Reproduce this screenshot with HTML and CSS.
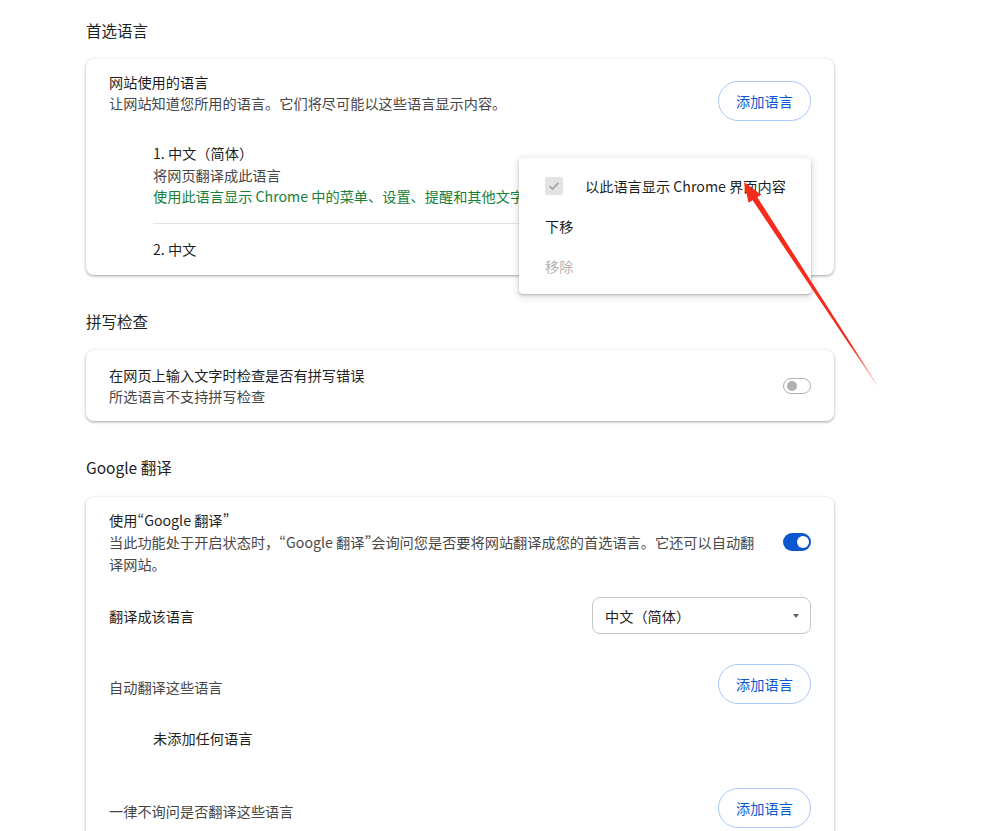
FILE: index.html
```html
<!DOCTYPE html>
<html lang="zh-CN">
  <head>
    <meta charset="UTF-8" />
    <meta name="viewport" content="width=device-width, initial-scale=1.0" />
    <title>语言</title>
    <link rel="stylesheet" href="styles.css">
  </head>
  <body>
    <div class="page">
      <h2 class="section-title">首选语言</h2>
      <div class="card languages">
        <div class="row head">
          <div class="text">
            <div class="label">网站使用的语言</div>
            <div class="sub">让网站知道您所用的语言。它们将尽可能以这些语言显示内容。</div>
          </div>
          <button class="add-btn">添加语言</button>
        </div>
        <ul class="lang-list">
          <li>
            <div class="label">1. 中文（简体）</div>
            <div class="sub">将网页翻译成此语言</div>
            <div class="note">使用此语言显示 Chrome 中的菜单、设置、提醒和其他文字</div>
          </li>
          <li>
            <div class="label">2. 中文</div>
          </li>
        </ul>

        <div class="menu">
          <div class="menu-item">
            <span class="checkbox">
              <svg width="18" height="18" viewBox="0 0 18 18"><path d="M4.6 9.2l2.9 2.9 5.9-6.2" fill="none" stroke="#a3a3a3" stroke-width="1.7"/></svg>
            </span>
            <span>以此语言显示 Chrome 界面内容</span>
          </div>
          <div class="menu-item">下移</div>
          <div class="menu-item disabled">移除</div>
        </div>
      </div>

      <h2 class="section-title spaced">拼写检查</h2>
      <div class="card spell">
        <div class="text">
          <div class="label">在网页上输入文字时检查是否有拼写错误</div>
          <div class="sub">所选语言不支持拼写检查</div>
        </div>
        <span class="toggle off"><span class="knob"></span></span>
      </div>

      <h2 class="section-title spaced">Google 翻译</h2>
      <div class="card translate">
        <div class="row first">
          <div class="text">
            <div class="label">使用<span class="q">“</span>Google 翻译<span class="q">”</span></div>
            <div class="sub">当此功能处于开启状态时，<span class="q">“</span>Google 翻译<span class="q">”</span>会询问您是否要将网站翻译成您的首选语言。它还可以自动翻译网站。</div>
          </div>
          <span class="toggle on"><span class="knob"></span></span>
        </div>

        <div class="row select-row">
          <div class="label">翻译成该语言</div>
          <div class="select">
            <span>中文（简体）</span>
            <span class="caret"></span>
          </div>
        </div>

        <div class="row btn-row">
          <div class="sub">自动翻译这些语言</div>
          <button class="add-btn">添加语言</button>
        </div>
        <div class="empty">未添加任何语言</div>

        <div class="row btn-row last">
          <div class="sub">一律不询问是否翻译这些语言</div>
          <button class="add-btn">添加语言</button>
        </div>
      </div>
    </div>

    <svg class="annotation" width="994" height="831" viewBox="0 0 994 831">
      <defs>
        <linearGradient id="fade" gradientUnits="userSpaceOnUse" x1="744" y1="182" x2="877" y2="385">
          <stop offset="0" stop-color="#f42b1d" />
          <stop offset="0.8" stop-color="#f42b1d" />
          <stop offset="1" stop-color="#f42b1d" stop-opacity="0.15" />
        </linearGradient>
      </defs>
      <polygon fill="url(#fade)" points="744,182 761.2,194.8 757.3,197.2 877.4,384.7 876.6,385.3 752.6,200.2 748.6,202.8" />
    </svg>
  </body>
</html>
```

FILE: styles.css
```css
* {
  box-sizing: border-box;
}
body {
  margin: 0;
  background: #fff;
  color: #1f1f1f;
  font-family: "Noto Sans CJK SC", "Noto Sans", sans-serif;
  font-size: 14.2px;
}
.page {
  width: 834px;
  padding: 20px 0 40px 86px;
}
.section-title {
  margin: 0 0 19px;
  font-size: 15.5px;
  font-weight: 400;
  line-height: 20px;
}
.section-title.spaced {
  margin-top: 36px;
}
.card {
  position: relative;
  background: #fff;
  border-radius: 8px;
  padding: 0 23px;
  box-shadow: 0 1px 2px rgba(60, 64, 67, 0.3), 0 1px 3px 1px rgba(60, 64, 67, 0.15);
}
.label {
  color: #1f1f1f;
}
.sub {
  color: #474747;
}
.note {
  color: #188038;
}
/* narrow curly quotes, as in the original */
.q {
  font-feature-settings: "pwid";
}
.row {
  display: flex;
  justify-content: space-between;
}

/* preferred languages */
.languages .head {
  align-items: flex-start;
  padding-top: 13px;
  line-height: 21px;
}
.add-btn {
  flex: none;
  width: 93px;
  height: 40px;
  padding: 0;
  border: 1px solid #a8c7fa;
  border-radius: 20px;
  background: #fff;
  color: #0b57d0;
  font-family: inherit;
  font-size: 14.2px;
}
.languages .add-btn {
  margin-top: 9px;
}
.lang-list {
  list-style: none;
  margin: 7px 0 0;
  padding: 0 0 0 44px;
}
.lang-list li {
  padding: 15px 0;
  line-height: 21.5px;
}
.lang-list li + li {
  border-top: 1px solid #e3e3e3;
}

/* action menu */
.menu {
  position: absolute;
  top: 99px;
  right: 23px;
  width: 292px;
  padding: 8px 0;
  background: #fff;
  border-radius: 4px;
  box-shadow: 0 1px 2px rgba(60, 64, 67, 0.3), 0 2px 6px 2px rgba(60, 64, 67, 0.15);
}
.menu-item {
  display: flex;
  align-items: center;
  height: 40px;
  padding: 0 26px;
  color: #1f1f1f;
  white-space: nowrap;
}
.menu-item.disabled {
  color: #b4b4b4;
}
.checkbox {
  display: flex;
  flex: none;
  width: 18px;
  height: 18px;
  margin-right: 22px;
  border-radius: 2px;
  background: #e3e3e3;
}

/* spell check */
.spell {
  display: flex;
  align-items: center;
  justify-content: space-between;
  padding: 15px 23px 14px;
  line-height: 21px;
}
.toggle {
  position: relative;
  flex: none;
  display: flex;
  align-items: center;
  width: 28px;
}
.toggle.off {
  height: 16px;
  border: 1px solid #b0b0b0;
  border-radius: 8px;
  padding-left: 3px;
}
.toggle.off .knob {
  width: 10px;
  height: 10px;
  border-radius: 50%;
  background: #b0b0b0;
}
.toggle.on {
  height: 18px;
  border-radius: 9px;
  background: #0b57d0;
  justify-content: flex-end;
  padding-right: 2px;
}
.toggle.on .knob {
  width: 12px;
  height: 12px;
  border-radius: 50%;
  background: #fff;
}

/* translate */
.translate {
  margin-top: 20px;
  padding-bottom: 30px;
}
.translate .first {
  align-items: center;
  padding-top: 12px;
  line-height: 22px;
}
.translate .first .text {
  padding-right: 22px;
}
.select-row {
  align-items: center;
  margin-top: 22px;
}
.select {
  display: flex;
  align-items: center;
  justify-content: space-between;
  width: 219px;
  height: 37px;
  padding: 0 11px 0 12px;
  border: 1px solid #c7c7c7;
  border-radius: 8px;
}
.caret {
  width: 0;
  height: 0;
  border-left: 3.5px solid transparent;
  border-right: 3.5px solid transparent;
  border-top: 4px solid #5f6368;
}
.btn-row {
  align-items: center;
  margin-top: 30px;
  line-height: 21px;
}
.btn-row .sub {
  padding-top: 6px;
}
.btn-row.last {
  margin-top: 39px;
}
.empty {
  margin-top: 24px;
  padding-left: 44px;
  line-height: 21px;
}

.annotation {
  position: absolute;
  top: 0;
  left: 0;
  pointer-events: none;
}
```
